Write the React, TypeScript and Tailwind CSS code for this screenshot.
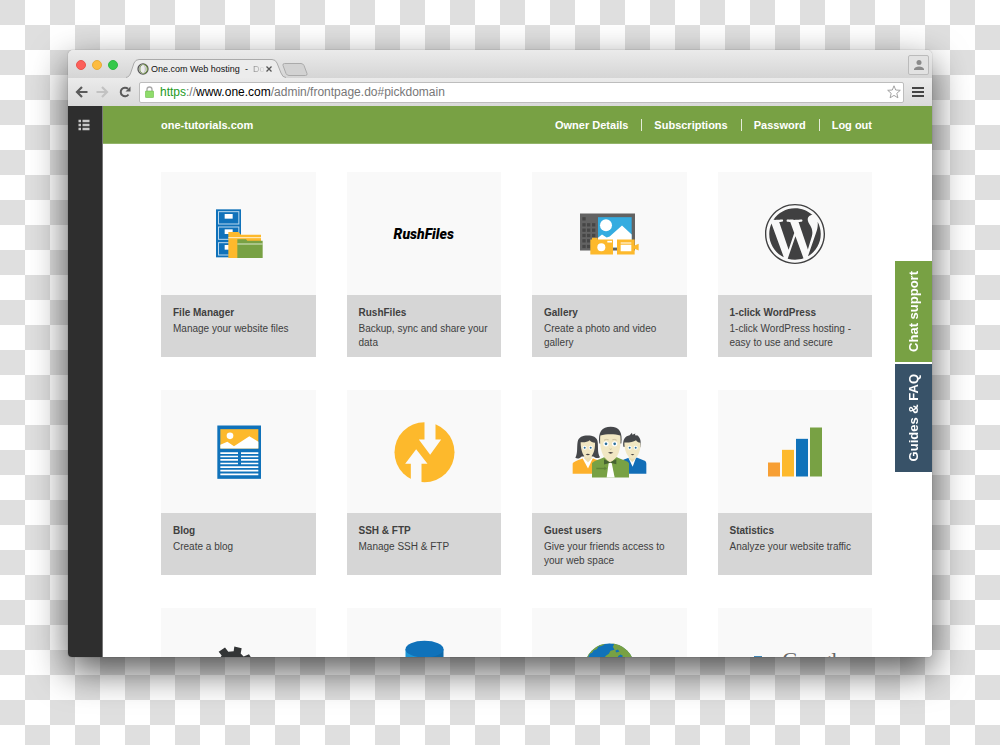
import type { ReactNode } from 'react'
import { FaWordpress } from 'react-icons/fa'

interface Tool {
  id: string
  title?: string
  description?: string
  icon: ReactNode
}

function FileManagerIcon() {
  return (
    <svg className="size-20" viewBox="-6 -4 240 240" fill="none">
      <rect x="48" y="42" width="75" height="144" fill="#1072ba" />
      {[49, 95, 142].map(y => (
        <g key={y}>
          <rect x="55.500" y={y} width="61" height="37" stroke="#b9d8ee" strokeWidth="3" />
          <rect x="74" y={y + 7} width="24" height="14" fill="#fff" />
        </g>
      ))}
      <path d="M85 188V110h30l8 8h60v70z" fill="#fdb92c" />
      <path d="M85 127h98" stroke="#fff0cf" strokeWidth="3" />
      <path d="M112 188V132h26l4 4h46v52z" fill="#78a144" />
      <path d="M112 146h76" stroke="#dbe8ca" strokeWidth="3" />
    </svg>
  )
}

function GalleryIcon() {
  return (
    <svg className="size-20" viewBox="147 70.500 240 240">
      <rect x="180" y="129" width="165" height="111" fill="#636363" />
      {[140, 158, 174, 190, 206, 223].map((y, row) =>
        [187, 201, 216].map((x, col) =>
          row === 0 && col > 0 ? null : <rect key={`${x}-${y}`} x={x} y={y} width="10" height="10" fill="#464646" />
        )
      )}
      <rect x="234" y="140" width="101" height="91" fill="#35ace0" />
      <circle cx="258" cy="164" r="18" fill="#fff" />
      <path d="M234 202l12-10 14 9 9-3 37-33 29 27v39H234z" fill="#fff" />
      <path d="M211 252v-45h5v-5h17v5h46v45z" fill="#fdb92c" />
      <rect x="262" y="211" width="14" height="5" fill="#fff" />
      <circle cx="244" cy="230" r="12" fill="#fff" />
      <path d="M291 207h53v18l12-5v20l-12-5v17h-53z" fill="#fdb92c" />
      <path d="M302 216h32v3h-32zM302 223h32v19h-32z" fill="#fff" />
    </svg>
  )
}

function BlogIcon() {
  return (
    <svg className="size-20" viewBox="114 34.500 240 240">
      <rect x="172" y="75" width="131" height="160" fill="#1072ba" />
      <rect x="181" y="86" width="114" height="58" fill="#fdb92c" />
      <circle cx="210" cy="106" r="10" fill="#fff" />
      <path d="M181 144v-11l21-9 20 13 46-30 27 17v20z" fill="#fff" />
      <path
        d="M181 158h53M181 168h53M181 178h53M181 189h53M243 158h52M243 168h52M243 178h52M243 189h52M181 200h114M181 210.500h114M181 221.500h114"
        stroke="#fff"
        strokeWidth="5"
      />
    </svg>
  )
}

function SshIcon() {
  return (
    <svg className="size-20" viewBox="673.500 34.500 240 240">
      <circle cx="795" cy="155" r="90" fill="#fdb92c" />
      <path d="M795 60h33v57h17l-33 46-34-46h17zM754 250v-60h-17l33-44 34 44h-18v60z" fill="#f9f9f9" />
    </svg>
  )
}

function Eyes({ x, y, gap, r }: { x: number; y: number; gap: number; r: number }) {
  return (
    <>
      <circle cx={x - gap} cy={y} r={r} fill="#fff" />
      <circle cx={x + gap} cy={y} r={r} fill="#fff" />
      <circle cx={x - gap} cy={y} r={r / 2} fill="#2b6f9b" />
      <circle cx={x + gap} cy={y} r={r / 2} fill="#2b6f9b" />
    </>
  )
}

function GuestUsersIcon() {
  return (
    <svg className="size-20" viewBox="12 -25.500 240 240">
      {/* woman on the left */}
      <path d="M31 112c8-14 4-32 7-48 3-15 15-19 30-19s28 4 30 19c2 17-1 34 7 46-8 5-16 2-20-2H50c-5 6-13 8-19 4z" fill="#45474a" />
      <path d="M23 160v-30c0-6 22-13 30-16h32c8 3 25 8 25 16v30z" fill="#fdb12c" />
      <path d="M53 114l16 30 14-30-4-6H58z" fill="#fff" />
      <path d="M58 104h22v10l-11 12-11-12z" fill="#ecdfb4" />
      <path d="M47 65c12 1 21-1 27-6 3 5 9 7 16 8 1 22-7 45-21 45S47 90 47 65z" fill="#f1e7c3" />
      <Eyes x={68} y={82} gap={9} r={6} />
      <path d="M62 102q6-4 13 0-6 4-13 0z" fill="#484443" />

      {/* man on the right */}
      <path d="M175 160v-42l16-6h26l22 9c4 2 5 6 5 10v29z" fill="#126eb7" />
      <path d="M190 112l13 27 10-27-4-6h-16z" fill="#fff" />
      <path d="M192 104h19v11l-9 10-10-10z" fill="#e9dcb2" />
      <path d="M175 79c-3-23 6-33 19-35l7-7 1 6 9-4-1 5 8 1c10 9 10 20 8 35z" fill="#45474a" />
      <path d="M178 66c15 1 27-3 35-7 3 5 7 7 13 8 2 26-8 48-23 48s-25-24-25-49z" fill="#f1e7c3" />
      <Eyes x={203} y={82} gap={9} r={6} />
      <path d="M197 102q6-3 11 0-5 4-11 0z" fill="#484443" />

      {/* man in front */}
      <path d="M81 171v-42c0-7 26-13 36-19h39c10 6 36 11 36 19v42z" fill="#78a144" />
      <path d="M119 111l17 18 16-18v-14h-33z" fill="#ecdfb4" />
      <path d="M131 127h9l9 44h-24z" fill="#fff" />
      <path d="M117 116l18 9 19-9v15l-18-4-19 5z" fill="#476331" />
      <path d="M94 142h24v-4l8 6-8 5v-3H94z" fill="#5f8637" />
      <path d="M103 69c-5-34 8-50 34-50s36 17 32 50z" fill="#45474a" />
      <path d="M106 45c18-5 43-5 60 0 4 39-8 75-30 75s-34-37-30-75z" fill="#f1e7c3" />
      <path d="M117 59q7-4 14-1M142 58q7-3 13 1M134 85q3 3 6 0" fill="none" stroke="#b6ab8b" strokeWidth="2" />
      <Eyes x={136} y={70} gap={13} r={8} />
      <path d="M129 97q7-5 16 0-8 5-16 0z" fill="#484443" />
    </svg>
  )
}

function StatisticsIcon() {
  return (
    <svg className="size-20" viewBox="705 34.500 240 240">
      <rect x="744" y="186" width="36" height="42" fill="#f79f34" />
      <rect x="786" y="148" width="36" height="80" fill="#fdb92c" />
      <rect x="828" y="115" width="36" height="113" fill="#1072ba" />
      <rect x="870" y="81" width="36" height="147" fill="#78a144" />
    </svg>
  )
}

function GearIcon() {
  return (
    <svg className="size-20" viewBox="475 88.500 240 240" fill="#333536">
      <path d="M540 174l6-9-9-11 19-13 10 13 16-2 2-14 22 5-3 16 9 9 16-7 8 13-5 9 12 20v35l-24 26h-50l-30-22v-40z" />
      <circle cx="588" cy="208" r="18" fill="#f9f9f9" />
    </svg>
  )
}

function DatabaseIcon() {
  return (
    <svg className="size-20" viewBox="1033.500 88.500 240 240">
      <path d="M1098 146h57v140c-34 0-57-12-57-24z" fill="#1b95d5" />
      <path d="M1155 146h57v116c0 12-25 24-57 24z" fill="#0f69a8" />
      <ellipse cx="1155" cy="146" rx="57" ry="25" fill="#1072ba" />
    </svg>
  )
}

function GlobeIcon() {
  return (
    <svg className="size-20" viewBox="148.500 88.500 240 240">
      <clipPath id="globe">
        <circle cx="270" cy="203" r="75" />
      </clipPath>
      <g clipPath="url(#globe)">
        <circle cx="270" cy="203" r="75" fill="#1072ba" />
        <path d="M264 126c38-3 66 17 84 44l4 20-30 4-9-12-11 4-4-8-9 4-12-4-8 6-9-8-3-9 11-7 5-9 12-3-5-9 4-8-11-4 3-5-13-3z" fill="#78a144" />
        <path d="M198 173c8-20 20-35 50-44l8 3-12 5-7 1-5 8-10 4-4 7-7 3-4 9z" fill="#78a144" />
        <path d="M287 151l8-4 5 6-9 3zM295 167l8-5 7 4-3 7h-9z" fill="#1072ba" />
      </g>
    </svg>
  )
}

const tools: Tool[] = [
  { id: 'files', title: 'File Manager', description: 'Manage your website files', icon: <FileManagerIcon /> },
  {
    id: 'rushfiles',
    title: 'RushFiles',
    description: 'Backup, sync and share your data',
    icon: <span className="font-[Roboto,sans-serif] text-sm font-black text-black italic">RushFiles</span>,
  },
  { id: 'gallery', title: 'Gallery', description: 'Create a photo and video gallery', icon: <GalleryIcon /> },
  {
    id: 'wordpress',
    title: '1-click WordPress',
    description: '1-click WordPress hosting - easy to use and secure',
    icon: <FaWordpress className="size-[62px] text-[#404041]" />,
  },
  { id: 'blog', title: 'Blog', description: 'Create a blog', icon: <BlogIcon /> },
  { id: 'ssh', title: 'SSH & FTP', description: 'Manage SSH & FTP', icon: <SshIcon /> },
  { id: 'guests', title: 'Guest users', description: 'Give your friends access to your web space', icon: <GuestUsersIcon /> },
  { id: 'statistics', title: 'Statistics', description: 'Analyze your website traffic', icon: <StatisticsIcon /> },
  { id: 'settings', icon: <GearIcon /> },
  { id: 'database', icon: <DatabaseIcon /> },
  { id: 'domains', icon: <GlobeIcon /> },
  {
    id: 'google',
    icon: (
      <div className="flex items-end gap-5 pb-5 pl-3">
        <span className="h-4 w-2 bg-[#3f86b5]" />
        <span className="font-['Liberation_Serif',serif] text-[22px] leading-6 text-[#666]">Google</span>
      </div>
    ),
  },
]

const navLinks = ['Owner Details', 'Subscriptions', 'Password', 'Log out']

function TabStrip() {
  return (
    <div className="flex h-7 items-end bg-linear-to-b from-[#ebebeb] to-[#d5d5d5] pl-2">
      <div className="flex gap-1.5 self-center pt-0.5">
        <button aria-label="Close window" className="size-2.5 rounded-full border border-[#e9544c] bg-[#fc605b]" />
        <button aria-label="Minimize window" className="size-2.5 rounded-full border border-[#e5ac3a] bg-[#fdbc40]" />
        <button aria-label="Zoom window" className="size-2.5 rounded-full border border-[#2fb944] bg-[#34c84a]" />
      </div>
      <div className="relative ml-2 flex h-[19px] w-40 items-center pr-3.5 pl-[11px]">
        <svg className="absolute inset-0 size-full" viewBox="0 0 160 19" preserveAspectRatio="none" aria-hidden="true">
          <path d="M0 18.500C3 18 4 16 5 13L8 4Q9.500.500 13 .500H146Q149.500.500 151 4L155 14Q156.500 18.500 160 18.500V19H0z" fill="#ececec" />
          <path d="M0 18.500C3 18 4 16 5 13L8 4Q9.500.500 13 .500H146Q149.500.500 151 4L155 14Q156.500 18.500 160 18.500" fill="none" stroke="#aaa" />
        </svg>
        <svg className="relative size-3 shrink-0" viewBox="0 0 12 12" fill="none" aria-hidden="true">
          <circle cx="6" cy="6" r="5" stroke="#555" strokeWidth="1.300" />
          <ellipse cx="6.500" cy="6" rx="3.700" ry="4.600" stroke="#78a144" />
          <ellipse cx="5.500" cy="6" rx="2.800" ry="4.500" stroke="#aaa" strokeWidth=".8" />
        </svg>
        <span className="relative ml-0.5 flex-1 text-[9px] leading-4 whitespace-nowrap text-[#111]">
          One.com Web hosting&nbsp; - <span className="bg-linear-to-r from-[#777] to-[#ddd] bg-clip-text text-transparent">&nbsp;Do</span>
        </span>
        <button aria-label="Close tab" className="relative ml-0.5 text-[#555]">
          <svg className="size-1.5" viewBox="0 0 6 6" stroke="currentColor" strokeWidth="1.300">
            <path d="M.5.500l5 5M5.500.500l-5 5" />
          </svg>
        </button>
      </div>
      <button aria-label="New tab" className="mb-0.5 -ml-1">
        <svg className="h-[13px] w-[26px]" viewBox="0 0 26 13" fill="#d2d2d2" stroke="#aaa">
          <path d="M2.500.500H19q2 0 3 2l3 8q.500 2-1.500 2H7q-2 0-3-2L1 2.500Q.500.500 2.500.500z" />
        </svg>
      </button>
      <button aria-label="Profile" className="mr-[3px] mb-[3px] ml-auto flex h-5 w-[21px] items-center justify-center rounded-xs border border-[#bbb] bg-[#e2e2e2]">
        <svg className="size-2.5" viewBox="0 0 10 10" fill="#8a8a8a">
          <circle cx="5" cy="2.600" r="2.500" />
          <path d="M0 10V9Q1 6.500 5 6.500T10 9v1z" />
        </svg>
      </button>
    </div>
  )
}

function Toolbar() {
  return (
    <div className="flex h-7 items-center bg-linear-to-b from-[#ebebeb] to-[#dadada] pr-2 pl-[7px]">
      <button aria-label="Back" className="text-[#5a5a5a]">
        <svg className="h-3 w-[13px]" viewBox="0 0 13 12" fill="none" stroke="currentColor" strokeWidth="2.200">
          <path d="M12.500 6H2M7 1L2 6l5 5" />
        </svg>
      </button>
      <button aria-label="Forward" className="ml-2 text-[#c2c2c2]">
        <svg className="h-3 w-[13px]" viewBox="0 0 13 12" fill="none" stroke="currentColor" strokeWidth="2.200">
          <path d="M.5 6H11M6 1l5 5-5 5" />
        </svg>
      </button>
      <button aria-label="Reload" className="ml-2.5 text-[#5a5a5a]">
        <svg className="size-3" viewBox="0 0 12 12" fill="none" stroke="currentColor" strokeWidth="2">
          <path d="M9.500 8.500A4.300 4.300 0 1 1 9 2.800" />
          <path d="M11.500.500v5h-5z" fill="currentColor" stroke="none" />
        </svg>
      </button>
      <div className="ml-2 flex h-[21px] flex-1 items-center rounded-xs border border-[#bdbdbd] bg-white pr-0.5 pl-[5px]">
        <svg className="h-3 w-[9px]" viewBox="0 0 9 12" aria-hidden="true">
          <path d="M2 6V3.500a2.500 2.500 0 0 1 5 0V6" fill="none" stroke="#aaa" strokeWidth="1.300" />
          <rect x=".3" y="5" width="8.400" height="6.500" rx=".8" fill="#8fdc6b" stroke="#6cb84c" strokeWidth=".6" />
        </svg>
        <div
          role="textbox"
          aria-label="Address"
          contentEditable
          suppressContentEditableWarning
          className="ml-1.5 flex-1 text-xs whitespace-nowrap text-[#777] outline-none"
        >
          <span className="text-[#1c9a1c]">https</span>://<span className="text-black">www.one.com</span>/admin/frontpage.do#pickdomain
        </div>
        <button aria-label="Bookmark this page">
          <svg className="size-3.5" viewBox="0 0 14 14" fill="none" stroke="#999" strokeWidth=".9">
            <path d="M7 .8l1.700 4.200 4.600.3-3.500 3 1.100 4.500L7 10.400l-3.900 2.400 1.100-4.500-3.500-3L5.300 5z" />
          </svg>
        </button>
      </div>
      <button aria-label="Browser menu" className="ml-2 flex w-3 flex-col gap-0.5">
        <span className="h-0.5 bg-[#444]" />
        <span className="h-0.5 bg-[#444]" />
        <span className="h-0.5 bg-[#444]" />
      </button>
    </div>
  )
}

function ToolCard({ tool }: { tool: Tool }) {
  return (
    <a href={`#${tool.id}`} aria-label={tool.title ?? tool.id} className="flex flex-col">
      <div className="flex h-[123px] items-center justify-center bg-[#f9f9f9]">{tool.icon}</div>
      {tool.title && (
        <div className="h-[62px] bg-[#d6d6d6] px-3 pt-2.5 text-[10px] text-[#404040]">
          <h2 className="leading-4 font-bold">{tool.title}</h2>
          <p className="pt-px leading-[14px]">{tool.description}</p>
        </div>
      )}
    </a>
  )
}

export default function App() {
  return (
    <div className="flex h-screen bg-[repeating-conic-gradient(#fff_0_25%,#dfdfdf_0_50%)] bg-size-[50px_50px] px-[68px] pt-[50px] pb-[88px] font-['Liberation_Sans',Arial,sans-serif]">
      <div className="flex flex-1 flex-col overflow-hidden rounded-t-[5px] rounded-b-sm shadow-[0_0_1px_rgba(0,0,0,0.5),0_14px_36px_rgba(0,0,0,0.65)]">
        <TabStrip />
        <Toolbar />

        <div className="flex min-h-0 flex-1">
          <aside className="w-[35px] border-r border-[#777] bg-[#2e2e2e] pt-[13px] pl-2.5">
            <button aria-label="Menu" className="block">
              <svg className="size-3" viewBox="0 0 12 12" stroke="#c8c8c8" strokeWidth="2.300">
                <path d="M.5 2h2.500M4.500 2h7M.5 6h2.500M4.500 6h7M.5 10h2.500M4.500 10h7" />
              </svg>
            </button>
          </aside>

          <div className="relative flex min-w-0 flex-1 flex-col bg-white">
            <header className="flex h-[38px] shrink-0 items-center justify-between border-b border-[#93b46a] bg-[#78a144] pr-15 pl-[58px] text-[11px] leading-3 font-bold text-white">
              <a href="#home">one-tutorials.com</a>
              <nav className="flex gap-[13px]">
                {navLinks.map((label, i) => (
                  <a key={label} href="#nav" className={i > 0 ? 'border-l border-white/80 pl-3' : ''}>
                    {label}
                  </a>
                ))}
              </nav>
            </header>

            <main className="min-h-0 flex-1 overflow-hidden pt-7 pr-15 pl-[58px]">
              <div className="grid grid-cols-4 gap-x-[31px] gap-y-[33px]">
                {tools.map(tool => (
                  <ToolCard key={tool.id} tool={tool} />
                ))}
              </div>
            </main>

            {/* Floating help tabs */}
            <div className="absolute top-[155px] right-0 flex w-[37px] flex-col gap-0.5 text-[13px] font-bold text-white">
              <button className="flex h-[101px] items-center justify-center bg-[#78a144]">
                <span className="rotate-180 [writing-mode:vertical-rl]">Chat support</span>
              </button>
              <button className="flex h-[108px] items-center justify-center bg-[#385268]">
                <span className="rotate-180 [writing-mode:vertical-rl]">Guides &amp; FAQ</span>
              </button>
            </div>
          </div>
        </div>
      </div>
    </div>
  )
}
